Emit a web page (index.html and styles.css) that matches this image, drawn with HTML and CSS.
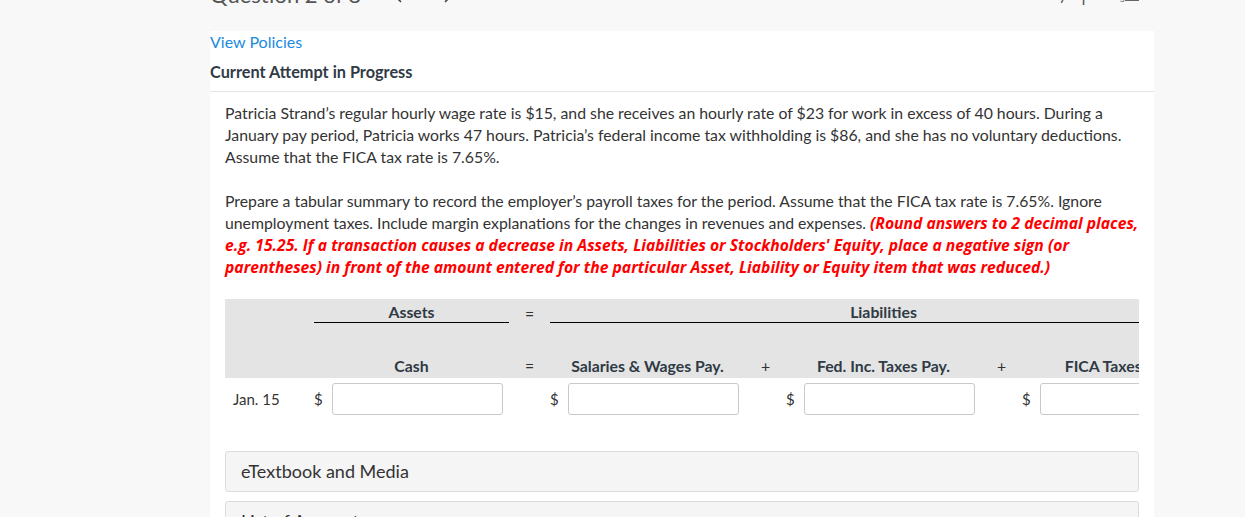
FILE: index.html
```html
<!DOCTYPE html>
<html>
<head>
<meta charset="utf-8">
<link rel="stylesheet" href="styles.css">
</head>
<body>
<div class="topbar">
  <div class="topbar-inner">
    <div class="q-title">Question 2 of 8</div>
    <div class="q-nav">
      <svg class="chev" width="10" height="14" viewBox="0 0 10 14"><path d="M8 1 L2 7 L8 13" fill="none" stroke="#444" stroke-width="1.6"/></svg>
      <svg class="chev" width="10" height="14" viewBox="0 0 10 14"><path d="M2 1 L8 7 L2 13" fill="none" stroke="#444" stroke-width="1.6"/></svg>
    </div>
    <div class="q-tools">
      <span class="tool-a">/</span>
      <span class="tool-b">|</span>
      <svg class="tool-list" width="20" height="16" viewBox="0 0 20 16"><text x="0" y="15" font-size="8" font-family="Lato" fill="#666">3</text><rect x="5" y="12" width="14" height="2" fill="#666"/></svg>
    </div>
  </div>
</div>
<div class="page">
  <div class="panel">
    <a class="policies" href="#">View Policies</a>
    <div class="attempt">Current Attempt in Progress</div>
    <div class="content">
      <p class="para">Patricia Strand’s regular hourly wage rate is $15, and she receives an hourly rate of $23 for work in excess of 40 hours. During a January pay period, Patricia works 47 hours. Patricia’s federal income tax withholding is $86, and she has no voluntary deductions. Assume that the FICA tax rate is 7.65%.</p>
      <p class="para second">Prepare a tabular summary to record the employer’s payroll taxes for the period. Assume that the FICA tax rate is 7.65%. Ignore unemployment taxes. Include margin explanations for the changes in revenues and expenses. <span class="red">(Round answers to 2 decimal places, e.g. 15.25. If a transaction causes a decrease in Assets, Liabilities or Stockholders' Equity, place a negative sign (or parentheses) in front of the amount entered for the particular Asset, Liability or Equity item that was reduced.)</span></p>

      <div class="tbl-wrap">
        <div class="tbl">
          <div class="thead">
            <div class="h1 c-assets">Assets</div>
            <div class="h1 c-eq1 sign">=</div>
            <div class="h1 c-liab">Liabilities</div>

            <div class="h2 c2">Cash</div>
            <div class="h2 c3 sign">=</div>
            <div class="h2 c4">Salaries &amp; Wages Pay.</div>
            <div class="h2 c5 sign">+</div>
            <div class="h2 c6">Fed. Inc. Taxes Pay.</div>
            <div class="h2 c7 sign">+</div>
            <div class="h2 c8">FICA Taxes Pay.</div>
          </div>
          <div class="trow">
            <div class="date">Jan. 15</div>
            <div class="val"><span class="dol">$</span><input class="inp" type="text"></div>
            <div></div>
            <div class="val"><span class="dol">$</span><input class="inp" type="text"></div>
            <div></div>
            <div class="val"><span class="dol">$</span><input class="inp" type="text"></div>
            <div></div>
            <div class="val"><span class="dol">$</span><input class="inp" type="text"></div>
          </div>
        </div>
      </div>

      <div class="box first-box">eTextbook and Media</div>
      <div class="box">List of Accounts</div>
    </div>
  </div>
</div>
</body>
</html>
```

FILE: styles.css
```css
* { box-sizing: border-box; }
html, body {
  margin: 0;
  padding: 0;
  background: #f8f8f8;
  font-family: Lato, "Open Sans", sans-serif;
  color: #333;
  overflow: hidden;
}
.topbar {
  height: 31px;
  background: #f8f8f8;
  overflow: hidden;
}
.topbar-inner {
  display: flex;
  align-items: flex-start;
  margin-top: -18px;
  padding-left: 210px;
}
.q-title {
  font-size: 22px;
  line-height: 26px;
  color: #555;
  width: 183px;
}
.q-nav {
  display: flex;
  gap: 40px;
  padding-top: 7px;
}
.q-tools {
  margin-left: auto;
  margin-right: 105px;
  display: flex;
  align-items: flex-start;
  gap: 8px;
  color: #555;
  font-size: 20px;
  line-height: 24px;
}
.tool-a { margin-right: 4px; }
.tool-b { margin-right: 26px; }
.tool-list { margin-top: 5px; }

.page {
  padding-left: 210px;
}
.panel {
  width: 944px;
  background: #fff;
  min-height: 486px;
}
.policies {
  display: block;
  font-size: 16px;
  line-height: 22px;
  color: #1a8ae0;
  text-decoration: none;
}
.attempt {
  margin-top: 8px;
  font-size: 16.3px;
  line-height: 22px;
  font-weight: 700;
  color: #2f3a45;
  padding-bottom: 8px;
  border-bottom: 1px solid #e6e6e6;
}
.content {
  padding: 0 15px;
}
.para {
  margin: 10px 0 0 0;
  font-size: 15.8px;
  line-height: 22px;
  color: #333;
}
.para.second { margin-top: 22px; }
.red {
  color: #f00;
  font-family: "Open Sans", Lato, sans-serif;
  font-size: 15.7px;
  font-weight: 700;
  font-style: italic;
}

.tbl-wrap {
  margin-top: 21px;
  width: 914px;
  overflow: hidden;
}
.tbl { width: 992px; }
.thead, .trow {
  display: grid;
  grid-template-columns: 89px 195px 41px 195px 41px 195px 41px 195px;
}
.thead {
  background: #e4e4e4;
  grid-template-rows: 24px 55px;
  font-size: 15.8px;
  font-weight: 700;
  color: #2f3a45;
}
.h1 {
  grid-row: 1;
  padding-top: 3px;
  line-height: 20px;
  text-align: center;
}
.c-assets { grid-column: 2; border-bottom: 1px solid #000; }
.c-eq1 { grid-column: 3; }
.c-liab { grid-column: 4 / span 5; border-bottom: 1px solid #000; }
.h2 {
  grid-row: 2;
  align-self: end;
  line-height: 20px;
  padding-bottom: 2px;
  text-align: center;
  white-space: nowrap;
}
.c2 { grid-column: 2; }
.c3 { grid-column: 3; }
.c4 { grid-column: 4; }
.c5 { grid-column: 5; }
.c6 { grid-column: 6; }
.c7 { grid-column: 7; }
.c8 { grid-column: 8; }
.sign { font-weight: 400; color: #333; }
.c-eq1.sign { padding-top: 5px; }

.trow {
  padding-top: 5px;
  font-size: 15px;
  align-items: center;
}
.date {
  padding-left: 8px;
  line-height: 32px;
}
.val {
  display: flex;
  align-items: center;
}
.dol {
  width: 18px;
  line-height: 32px;
}
.inp {
  width: 171px;
  height: 32px;
  border: 1px solid #c9c9c9;
  border-radius: 3px;
  background: #fff;
  margin: 0;
  padding: 0 6px;
  font-family: Lato, sans-serif;
  font-size: 15px;
}

.box {
  margin-top: 9px;
  height: 41px;
  border: 1px solid #dcdcdc;
  border-radius: 3px;
  background: #f5f5f5;
  padding-left: 15px;
  font-size: 18px;
  line-height: 39px;
  color: #333;
}
.box.first-box { margin-top: 36px; }
```
